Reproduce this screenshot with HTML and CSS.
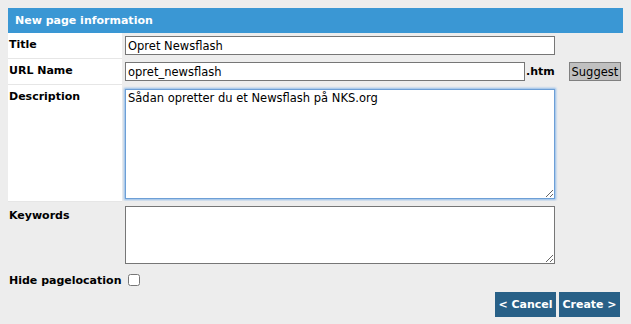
FILE: index.html
```html
<!DOCTYPE html>
<html lang="en">
<head>
    <meta charset="UTF-8">
    <meta name="viewport" content="width=device-width, initial-scale=1.0">
    <title>New page information</title>
    <link rel="stylesheet" href="styles.css">
</head>
<body>

<div class="panel">
    <div class="panel-head">New page information</div>
    <form onsubmit="event.preventDefault();">
    <table class="form-table">
        <tr class="row-main">
            <th><label for="pageTitle">Title</label></th>
            <td><input type="text" id="pageTitle" class="field-wide" value="Opret Newsflash"></td>
        </tr>
        <tr class="row-main">
            <th><label for="urlName">URL Name</label></th>
            <td class="url-cell">
                <input type="text" id="urlName" class="field-url" value="opret_newsflash"><span class="ext">.htm</span>
                <button type="button" class="suggest-btn">Suggest</button>
            </td>
        </tr>
        <tr class="row-main row-desc">
            <th><label for="description">Description</label></th>
            <td><textarea id="description" class="area-desc">Sådan opretter du et Newsflash på NKS.org</textarea></td>
        </tr>
        <tr class="row-plain">
            <th><label for="keywords">Keywords</label></th>
            <td><textarea id="keywords" class="area-keys"></textarea></td>
        </tr>
        <tr class="row-check">
            <th><label for="hideLocation">Hide pagelocation</label></th>
            <td><input type="checkbox" id="hideLocation" class="check"></td>
        </tr>
    </table>
    <div class="actions">
        <button type="button" class="nav-btn">&lt; Cancel</button>
        <button type="submit" class="nav-btn">Create &gt;</button>
    </div>
    </form>
</div>

</body>
</html>
```

FILE: styles.css
```css
body {
    margin: 8px;
    background-color: #ededed;
    font-family: "DejaVu Sans", Verdana, sans-serif;
    font-size: 11px;
    color: #000;
}

.panel {
    width: 616px;
}

.panel-head {
    height: 25px;
    line-height: 25px;
    padding-left: 7px;
    background-color: #3a97d4;
    color: #fff;
    font-weight: bold;
    font-size: 11px;
}

.form-table {
    border-collapse: collapse;
    table-layout: fixed;
    width: 100%;
}

.form-table th {
    width: 113px;
    padding: 5px 0 0 1px;
    text-align: left;
    vertical-align: top;
    font-weight: bold;
    line-height: 14px;
    white-space: nowrap;
}

.form-table td {
    padding: 3px 0 3px 3px;
    vertical-align: top;
}

.row-main th {
    background-color: #fff;
    border-bottom: 1px solid #e6e6e6;
}

.row-main td {
    border-bottom: 1px solid #ededed;
}

.row-desc td {
    padding-top: 4px;
    padding-bottom: 2px;
}

.row-plain th {
    padding-top: 7px;
}

.row-plain td {
    padding-top: 4px;
}

.row-check th {
    padding-top: 7px;
}

.row-check td {
    padding-top: 7px;
}

input[type="text"], textarea {
    box-sizing: border-box;
    margin: 0;
    padding: 1px 2px;
    border: 1px solid #767676;
    background: #fff;
    font-family: "DejaVu Sans", Verdana, sans-serif;
    font-size: 11.5px;
    color: #000;
    outline: none;
}

input[type="text"] {
    height: 19px;
    vertical-align: top;
}

.field-wide {
    width: 430px;
}

.url-cell {
    white-space: nowrap;
}

.field-url {
    width: 400px;
}

.ext {
    display: inline-block;
    width: 39px;
    padding-left: 1px;
    line-height: 19px;
    font-weight: bold;
    vertical-align: top;
}

.suggest-btn {
    height: 19px;
    margin: 0;
    padding: 0 2px;
    border: 1px solid #808080;
    background-color: #c0c0c0;
    font-family: "DejaVu Sans", Verdana, sans-serif;
    font-size: 11.5px;
    color: #000;
    vertical-align: top;
}

textarea {
    display: block;
    width: 430px;
    resize: vertical;
}

.area-desc {
    height: 110px;
    border-color: #6d9fd6;
    box-shadow: 0 0 2px 1px #8fbbea;
}

.area-keys {
    height: 58px;
}

.check {
    display: block;
    margin: 0 0 0 3px;
    width: 12px;
    height: 12px;
}

.actions {
    display: flex;
    justify-content: flex-end;
    gap: 3px;
    padding: 3px 4px 0 0;
}

.nav-btn {
    width: 61px;
    height: 25px;
    padding: 0;
    border: none;
    background-color: #286087;
    color: #fff;
    font-family: "DejaVu Sans", Verdana, sans-serif;
    font-size: 11px;
    font-weight: bold;
    cursor: pointer;
}

.nav-btn:hover {
    background-color: #1f4d6d;
}
```
